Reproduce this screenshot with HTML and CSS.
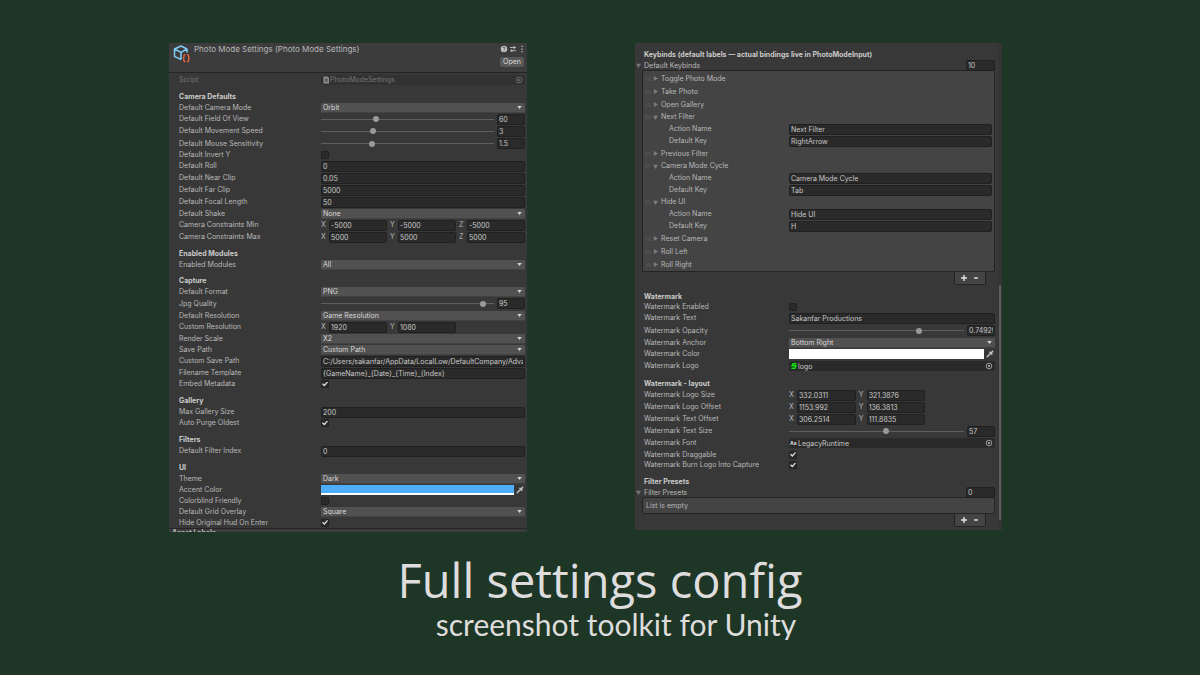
FILE: index.html
```html
<!DOCTYPE html>
<html lang="en">
<head>
	<meta charset="UTF-8">
	<title>Full settings config</title>
	<link rel="stylesheet" href="styles.css">
</head>
<body>
	<!-- shared icons -->
	<svg class="sprite" aria-hidden="true">
		<symbol id="caret" viewBox="0 0 6 4"><path d="M0 0h6L3 4z" fill="currentColor"/></symbol>
		<symbol id="right" viewBox="0 0 6 6"><path d="M1 0l5 3-5 3z" fill="currentColor"/></symbol>
		<symbol id="down" viewBox="0 0 6 6"><path d="M0 1h6L3 6z" fill="currentColor"/></symbol>
		<symbol id="grip" viewBox="0 0 6 4"><path d="M0 1h6M0 3h6" stroke="currentColor" stroke-width=".7"/></symbol>
		<symbol id="target" viewBox="0 0 8 8"><circle cx="4" cy="4" r="2.8" fill="none" stroke="currentColor" stroke-width=".8"/><circle cx="4" cy="4" r="1.1" fill="currentColor"/></symbol>
		<symbol id="dropper" viewBox="0 0 8 8"><path d="M1.2 6.8l3-3" stroke="currentColor" stroke-width="1.4" stroke-linecap="round"/><path d="M3.9 2.2l1.9 1.9M4.8 3.2L6.6 1.4" stroke="currentColor" stroke-width="1.5" stroke-linecap="round"/></symbol>
	</svg>
	<main class="panels">
		<section class="panel">
			<header class="head">
				<svg class="asset" viewBox="0 0 18 20">
					<path d="M14 8.500V5L8 2 1.500 5v7.300L8 15.500M1.500 5L8 8.300 14 5M8 8.300v7.200" fill="none" stroke="#7fcdf5" stroke-width="1.500" stroke-linejoin="round"/>
					<path d="M12.500 10.700h-.6q-1 0-1 1v1.500q0 1-1.100 1 1.100 0 1.100 1v1.500q0 1 1 1h.6M14 10.700h.6q1 0 1 1v1.500q0 1 1.100 1-1.100 0-1.100 1v1.500q0 1-1 1H14" fill="none" stroke="#f0673c" stroke-width="1.300"/>
				</svg>
				<h2 class="title">Photo Mode Settings (Photo Mode Settings)</h2>
				<div class="tools">
					<div class="icons">
						<svg viewBox="0 0 8 8"><circle cx="4" cy="4" r="3.2" fill="#c4c4c4"/><path d="M2.900 3.100c0-1.500 2.300-1.400 2.300 0 0 .8-1.100.8-1.100 1.600M4.100 5.500v.8" fill="none" stroke="#3c3c3c" stroke-width=".8"/></svg>
						<svg viewBox="0 0 8 8"><path d="M1 2.500h6M5.200 1v3M1 5.700h6M2.800 4.200v3" stroke="#c4c4c4" stroke-width=".9"/></svg>
						<svg viewBox="0 0 8 8"><path d="M4 .8v1.300M4 3.400v1.300M4 6v1.300" stroke="#c4c4c4" stroke-width="1.300"/></svg>
					</div>
					<button class="open" type="button">Open</button>
				</div>
			</header>
			<div class="body">
				<label class="row off"><span>Script</span><span class="object"><svg viewBox="0 0 8 8"><path d="M1.500.5h4l1.500 1.500v5.500h-5.500z" fill="#8b8f8b"/><path d="M3 3.200h2.500M3 5h2.500M3.700 2.400v3.500M5 2.400v3.500" stroke="#3a3a3a" stroke-width=".5"/></svg><input type="text" value="PhotoModeSettings" disabled><svg><use href="#target"/></svg></span></label>

				<h3>Camera Defaults</h3>
				<label class="row"><span>Default Camera Mode</span><span class="select"><select><option>Orbit</option></select><svg><use href="#caret"/></svg></span></label>
				<label class="row tall"><span>Default Field Of View</span><span class="slider"><input type="range" min="10" max="170" value="60"><input type="text" value="60" aria-label="Field of view value"></span></label>
				<label class="row tall"><span>Default Movement Speed</span><span class="slider"><input type="range" min="0.1" max="10" step="0.1" value="3"><input type="text" value="3" aria-label="Movement speed value"></span></label>
				<label class="row taller"><span>Default Mouse Sensitivity</span><span class="slider"><input type="range" min="0.1" max="5" step="0.1" value="1.5"><input type="text" value="1.5" aria-label="Mouse sensitivity value"></span></label>
				<label class="row check"><span>Default Invert Y</span><input type="checkbox"></label>
				<label class="row tall"><span>Default Roll</span><input type="text" value="0"></label>
				<label class="row tall"><span>Default Near Clip</span><input type="text" value="0.05"></label>
				<label class="row tall"><span>Default Far Clip</span><input type="text" value="5000"></label>
				<label class="row tall"><span>Default Focal Length</span><input type="text" value="50"></label>
				<label class="row"><span>Default Shake</span><span class="select"><select><option>None</option></select><svg><use href="#caret"/></svg></span></label>
				<div class="row tall"><span>Camera Constraints Min</span><div class="vector"><label>X<input type="text" value="-5000"></label><label>Y<input type="text" value="-5000"></label><label>Z<input type="text" value="-5000"></label></div></div>
				<div class="row tall"><span>Camera Constraints Max</span><div class="vector"><label>X<input type="text" value="5000"></label><label>Y<input type="text" value="5000"></label><label>Z<input type="text" value="5000"></label></div></div>

				<h3>Enabled Modules</h3>
				<label class="row"><span>Enabled Modules</span><span class="select"><select><option>All</option></select><svg><use href="#caret"/></svg></span></label>

				<h3>Capture</h3>
				<label class="row"><span>Default Format</span><span class="select"><select><option>PNG</option></select><svg><use href="#caret"/></svg></span></label>
				<label class="row taller"><span>Jpg Quality</span><span class="slider"><input type="range" min="0" max="100" value="95"><input type="text" value="95" aria-label="Jpg quality value"></span></label>
				<label class="row"><span>Default Resolution</span><span class="select"><select><option>Game Resolution</option></select><svg><use href="#caret"/></svg></span></label>
				<div class="row tall"><span>Custom Resolution</span><div class="vector"><label>X<input type="text" value="1920"></label><label>Y<input type="text" value="1080"></label></div></div>
				<label class="row"><span>Render Scale</span><span class="select"><select><option>X2</option></select><svg><use href="#caret"/></svg></span></label>
				<label class="row"><span>Save Path</span><span class="select"><select><option>Custom Path</option></select><svg><use href="#caret"/></svg></span></label>
				<label class="row tall"><span>Custom Save Path</span><input type="text" value="C:/Users/sakanfar/AppData/LocalLow/DefaultCompany/Adva"></label>
				<label class="row tall"><span>Filename Template</span><input type="text" value="{GameName}_{Date}_{Time}_{Index}"></label>
				<label class="row check"><span>Embed Metadata</span><input type="checkbox" checked></label>

				<h3>Gallery</h3>
				<label class="row tall"><span>Max Gallery Size</span><input type="text" value="200"></label>
				<label class="row check"><span>Auto Purge Oldest</span><input type="checkbox" checked></label>

				<h3>Filters</h3>
				<label class="row tall"><span>Default Filter Index</span><input type="text" value="0"></label>

				<h3>UI</h3>
				<label class="row"><span>Theme</span><span class="select"><select><option>Dark</option></select><svg><use href="#caret"/></svg></span></label>
				<label class="row tall"><span>Accent Color</span><span class="color"><input type="color" value="#4eaefc"><svg><use href="#dropper"/></svg></span></label>
				<label class="row check"><span>Colorblind Friendly</span><input type="checkbox"></label>
				<label class="row"><span>Default Grid Overlay</span><span class="select"><select><option>Square</option></select><svg><use href="#caret"/></svg></span></label>
				<label class="row"><span>Hide Original Hud On Enter</span><input type="checkbox" checked></label>
			</div>
			<footer class="labels">Asset Labels</footer>
		</section>

		<section class="panel scrolled">
			<div class="body">
				<h3>Keybinds (default labels — actual bindings live in PhotoModeInput)</h3>
				<label class="fold"><svg><use href="#down"/></svg><span>Default Keybinds</span><input type="text" value="10"></label>
				<ul class="list">
					<li><div class="item"><svg><use href="#grip"/></svg><svg><use href="#right"/></svg>Toggle Photo Mode</div></li>
					<li><div class="item"><svg><use href="#grip"/></svg><svg><use href="#right"/></svg>Take Photo</div></li>
					<li><div class="item"><svg><use href="#grip"/></svg><svg><use href="#right"/></svg>Open Gallery</div></li>
					<li class="expanded">
						<div class="item"><svg><use href="#grip"/></svg><svg><use href="#down"/></svg>Next Filter</div>
						<label class="row tall"><span>Action Name</span><input type="text" value="Next Filter"></label>
						<label class="row tall"><span>Default Key</span><input type="text" value="RightArrow"></label>
					</li>
					<li><div class="item"><svg><use href="#grip"/></svg><svg><use href="#right"/></svg>Previous Filter</div></li>
					<li class="expanded">
						<div class="item"><svg><use href="#grip"/></svg><svg><use href="#down"/></svg>Camera Mode Cycle</div>
						<label class="row tall"><span>Action Name</span><input type="text" value="Camera Mode Cycle"></label>
						<label class="row tall"><span>Default Key</span><input type="text" value="Tab"></label>
					</li>
					<li class="expanded">
						<div class="item"><svg><use href="#grip"/></svg><svg><use href="#down"/></svg>Hide UI</div>
						<label class="row tall"><span>Action Name</span><input type="text" value="Hide UI"></label>
						<label class="row tall"><span>Default Key</span><input type="text" value="H"></label>
					</li>
					<li><div class="item"><svg><use href="#grip"/></svg><svg><use href="#right"/></svg>Reset Camera</div></li>
					<li><div class="item"><svg><use href="#grip"/></svg><svg><use href="#right"/></svg>Roll Left</div></li>
					<li><div class="item"><svg><use href="#grip"/></svg><svg><use href="#right"/></svg>Roll Right</div></li>
				</ul>
				<div class="buttons"><button type="button" aria-label="Add keybind"><svg viewBox="0 0 6 6"><path d="M0 3h6M3 0v6" stroke="currentColor" stroke-width="1.4"/></svg></button><button type="button" aria-label="Remove keybind"><svg viewBox="0 0 6 6"><path d="M1 3h4" stroke="currentColor" stroke-width="1.4"/></svg></button></div>

				<h3>Watermark</h3>
				<label class="row check"><span>Watermark Enabled</span><input type="checkbox"></label>
				<label class="row tall"><span>Watermark Text</span><input type="text" value="Sakanfar Productions"></label>
				<label class="row taller"><span>Watermark Opacity</span><span class="slider"><input type="range" min="0" max="1" step="0.001" value="0.749"><input type="text" value="0.74929" aria-label="Opacity value"></span></label>
				<label class="row"><span>Watermark Anchor</span><span class="select"><select><option>Bottom Right</option></select><svg><use href="#caret"/></svg></span></label>
				<label class="row tall"><span>Watermark Color</span><span class="color"><input type="color" value="#ffffff"><svg><use href="#dropper"/></svg></span></label>
				<label class="row tall"><span>Watermark Logo</span><span class="object"><svg viewBox="0 0 8 8"><path d="M1 1h6v6H1z" fill="#062b08"/><path d="M6.500 1.800H3L2 3.800h4L5 6.200H1.500" fill="none" stroke="#1be01b" stroke-width="1.400"/></svg><input type="text" value="logo"><svg><use href="#target"/></svg></span></label>

				<h3>Watermark - layout</h3>
				<div class="row tall"><span>Watermark Logo Size</span><div class="vector"><label>X<input type="text" value="332.0311"></label><label>Y<input type="text" value="321.3876"></label></div></div>
				<div class="row tall"><span>Watermark Logo Offset</span><div class="vector"><label>X<input type="text" value="1153.992"></label><label>Y<input type="text" value="136.3813"></label></div></div>
				<div class="row tall"><span>Watermark Text Offset</span><div class="vector"><label>X<input type="text" value="306.2514"></label><label>Y<input type="text" value="111.8835"></label></div></div>
				<label class="row tall"><span>Watermark Text Size</span><span class="slider"><input type="range" min="8" max="96" value="57"><input type="text" value="57" aria-label="Text size value"></span></label>
				<label class="row tall"><span>Watermark Font</span><span class="object"><b class="aa">Aa</b><input type="text" value="LegacyRuntime"><svg><use href="#target"/></svg></span></label>
				<label class="row"><span>Watermark Draggable</span><input type="checkbox" checked></label>
				<label class="row check"><span>Watermark Burn Logo Into Capture</span><input type="checkbox" checked></label>

				<h3>Filter Presets</h3>
				<label class="fold"><svg><use href="#down"/></svg><span>Filter Presets</span><input type="text" value="0"></label>
				<div class="list empty">List is empty</div>
				<div class="buttons"><button type="button" aria-label="Add preset"><svg viewBox="0 0 6 6"><path d="M0 3h6M3 0v6" stroke="currentColor" stroke-width="1.4"/></svg></button><button type="button" aria-label="Remove preset"><svg viewBox="0 0 6 6"><path d="M1 3h4" stroke="currentColor" stroke-width="1.4"/></svg></button></div>
			</div>
			<div class="scrollbar"><div class="thumb"></div></div>
		</section>
	</main>
	<div class="caption">
		<h1>Full settings config</h1>
		<p>screenshot toolkit for Unity</p>
	</div>
</body>
</html>
```
FILE: styles.css
```css
* {
	box-sizing: border-box;
	margin: 0;
	padding: 0;
}
body {
	background-color: #1d3626;
	color: #b8b8b8;
	font: 7px/10px Inter, "Liberation Sans", sans-serif;
}
input, select, button {
	font: inherit;
	color: inherit;
	border: 0;
	min-width: 0;
}
svg {
	display: block;
	width: 8px;
	height: 8px;
}
.sprite {
	position: absolute;
	width: 0;
	height: 0;
}
.panels {
	display: grid;
	grid-template-columns: 358fr 367fr;
	gap: 108px;
	align-items: start;
	padding: 43px 198px 0 169px;
}
.panel {
	background-color: #383838;
	overflow: hidden;
}

/* header */
.head {
	display: flex;
	height: 30px;
	padding: 1px 1px 0 4px;
	background-color: #3c3c3c;
	border-bottom: 1px solid #242424;
}
.asset {
	width: 18px;
	height: 20px;
}
.title {
	flex: 1;
	padding-left: 3px;
	font-size: 8px;
	font-weight: 400;
}
.tools {
	display: flex;
	flex-direction: column;
	align-items: flex-end;
	gap: 4px;
}
.icons {
	display: flex;
	gap: 1px;
	padding-top: 1px;
}
.open {
	width: 24px;
	height: 10px;
	margin-right: 2px;
	background-color: #585858;
	color: #dedede;
	border-radius: 2px;
}

/* rows */
.body {
	padding: 1px 2px 0 10px;
}
h3 {
	margin-top: 6px;
	font-size: 7px;
	line-height: 10px;
	font-weight: 700;
	color: #cbcbcb;
}
.row {
	display: grid;
	grid-template-columns: 142fr 204fr;
	align-items: center;
	height: 11px;
}
.check {
	height: 10px;
}
.tall {
	height: 12px;
}
.taller {
	height: 13px;
}
.off {
	margin-bottom: 7px;
	color: #757575;
}
.check + h3 {
	margin-top: 7px;
}
input[type="text"] {
	width: 100%;
	height: 11px;
	padding: 0 1px;
	background-color: #2a2a2a;
	border: 1px solid #202020;
	border-radius: 2px;
	line-height: 9px;
	color: #c8c8c8;
}
.select {
	display: grid;
	grid-template-columns: 1fr 11px;
	align-items: center;
}
.select select {
	grid-area: 1 / 1 / 2 / 3;
	height: 10px;
	padding: 0 2px;
	appearance: none;
	background-color: #515151;
	border-bottom: 1px solid #424242;
	border-radius: 1px;
	line-height: 9px;
	color: #d8d8d8;
}
.select svg {
	grid-area: 1 / 2;
	width: 5px;
	height: 3px;
	justify-self: center;
	pointer-events: none;
	color: #d4d4d4;
}
.slider {
	display: grid;
	grid-template-columns: 1fr 28px;
	gap: 3px;
	align-items: center;
}
input[type="range"] {
	width: 100%;
	height: 6px;
	appearance: none;
	background: linear-gradient(#5e5e5e, #5e5e5e) center / 100% 1px no-repeat;
}
input[type="range"]::-webkit-slider-thumb {
	appearance: none;
	width: 6px;
	height: 6px;
	border-radius: 50%;
	background-color: #999;
}
input[type="checkbox"] {
	display: grid;
	place-items: center;
	width: 8px;
	height: 8px;
	appearance: none;
	background-color: #2a2a2a;
	border: 1px solid #222;
	border-radius: 1px;
}
input[type="checkbox"]:checked::before {
	content: "";
	width: 6px;
	height: 5px;
	background-color: #ddd;
	clip-path: polygon(0 55%, 15% 35%, 38% 62%, 85% 0, 100% 16%, 40% 100%);
}
.vector {
	display: grid;
	grid-template-columns: repeat(3, 1fr);
	gap: 3px;
}
.vector label {
	display: grid;
	grid-template-columns: 8px 1fr;
	align-items: center;
}
.color {
	display: grid;
	grid-template-columns: 1fr 8px;
	gap: 2px;
	align-items: center;
	padding-right: 1px;
	color: #c4c4c4;
}
input[type="color"] {
	width: 100%;
	height: 10px;
	appearance: none;
	background: none;
	border-bottom: 2px solid #fff;
}
input[type="color"]::-webkit-color-swatch-wrapper {
	padding: 0;
}
input[type="color"]::-webkit-color-swatch {
	border: 0;
}
.object {
	display: grid;
	grid-template-columns: 8px 1fr 8px;
	align-items: center;
	height: 10px;
	padding: 0 2px 0 1px;
	background-color: #2a2a2a;
	border-radius: 2px;
}
.object input[type="text"] {
	height: 9px;
	padding: 0;
	border: 0;
	background: none;
}
.off .object {
	background-color: #323232;
}
.off .object input[type="text"] {
	color: #757575;
}
.aa {
	font-size: 5px;
	line-height: 8px;
	color: #ddd;
}
.labels {
	height: 4px;
	padding-left: 3px;
	border-top: 1px solid #242424;
	background-color: #3c3c3c;
	font-weight: 700;
	line-height: 8px;
	overflow: hidden;
}

/* right panel */
.scrolled {
	display: grid;
	grid-template-columns: 1fr 4px;
}
.scrolled .body {
	padding: 0 3px 3px 9px;
}
.scrolled h3 {
	margin-top: 7px;
}
.scrolled .row {
	grid-template-columns: 145fr 206fr;
}
.fold {
	display: grid;
	grid-template-columns: 8px 1fr 29px;
	align-items: center;
	height: 10px;
	margin-left: -8px;
}
.fold svg {
	width: 5px;
	height: 5px;
	color: #747474;
}
.list {
	margin-left: -2px;
	padding: 1px 2px 0;
	background-color: #444;
	border: 1px solid #242424;
	border-radius: 2px;
	list-style: none;
}
.item {
	display: grid;
	grid-template-columns: 6px 6px 1fr;
	gap: 2px;
	align-items: center;
	height: 13px;
}
.expanded .item {
	height: 12px;
}
.item svg {
	width: 6px;
	height: 4px;
	color: #5a5a5a;
}
.item svg + svg {
	width: 5px;
	height: 5px;
	color: #7c7c7c;
}
.scrolled .list .row {
	grid-template-columns: 120fr 203fr;
	padding-left: 24px;
}
.list.empty {
	height: 17px;
	padding: 0 3px;
	line-height: 15px;
}
.buttons {
	display: flex;
	width: 32px;
	height: 13px;
	margin: 0 9px 0 auto;
	padding: 0 3px;
	background-color: #444;
	border: 1px solid #242424;
	border-top: 0;
	border-radius: 0 0 2px 2px;
}
.buttons button {
	display: grid;
	flex: 1;
	place-items: center;
	background: none;
	color: #e4e4e4;
}
.buttons svg {
	width: 6px;
	height: 6px;
}
.scrollbar {
	display: grid;
	grid-template-rows: 242fr 235fr 10fr;
	background-color: #353535;
}
.thumb {
	grid-row: 2;
	margin: 0 1px;
	border-radius: 1px;
	background-color: #5f5f5f;
}

/* caption */
.caption {
	padding-top: 20px;
	color: #dedcdc;
	text-align: center;
}
.caption h1 {
	font: 400 47px/56px "Open Sans", sans-serif;
}
.caption p {
	padding-left: 32px;
	font: 400 30px/32px Lato, sans-serif;
}
```
